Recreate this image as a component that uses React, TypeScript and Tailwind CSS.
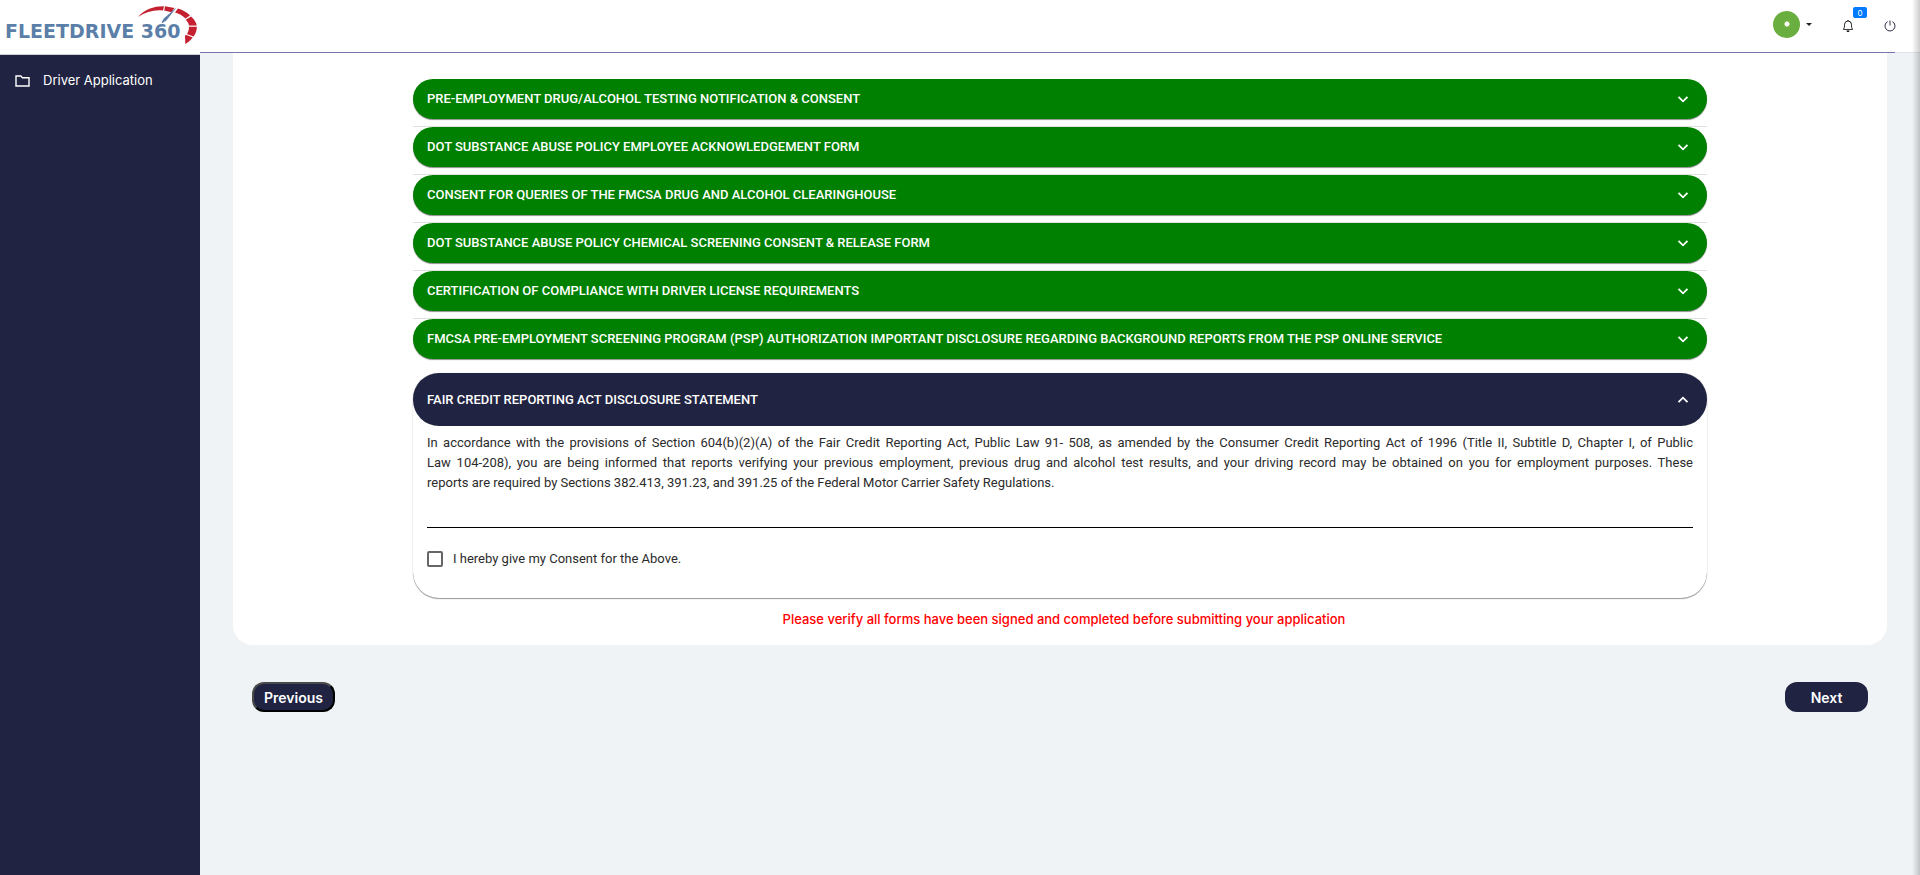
import { useState } from "react";
import { BsBell } from "react-icons/bs";

const sections: string[] = [
  "PRE-EMPLOYMENT DRUG/ALCOHOL TESTING NOTIFICATION & CONSENT",
  "DOT SUBSTANCE ABUSE POLICY EMPLOYEE ACKNOWLEDGEMENT FORM",
  "CONSENT FOR QUERIES OF THE FMCSA DRUG AND ALCOHOL CLEARINGHOUSE",
  "DOT SUBSTANCE ABUSE POLICY CHEMICAL SCREENING CONSENT & RELEASE FORM",
  "CERTIFICATION OF COMPLIANCE WITH DRIVER LICENSE REQUIREMENTS",
  "FMCSA PRE-EMPLOYMENT SCREENING PROGRAM (PSP) AUTHORIZATION IMPORTANT DISCLOSURE REGARDING BACKGROUND REPORTS FROM THE PSP ONLINE SERVICE",
];

function Chevron({ up = false }: { up?: boolean }) {
  return (
    <svg viewBox="0 0 12 8" className="h-2 w-3 shrink-0" fill="none" stroke="white" strokeWidth="1.8" aria-hidden="true">
      <path d={up ? "M1.5 6.2 6 1.7l4.5 4.5" : "M1.5 1.8 6 6.3l4.5-4.5"} />
    </svg>
  );
}

function Gauge() {
  return (
    <svg viewBox="0 0 60 40" className="absolute top-[5px] left-[137px] h-10 w-[60px]" aria-hidden="true">
      <path d="M1 12C8 4 17 1 27 1.200L26 5.400C17 4.500 9 6.500 1 12Z" fill="#c4202f" />
      <path d="M28 1.200 37.500 3 34.500 7.200 27.200 5.500Z" fill="#c4202f" />
      <path d="M41 3.500C46 5 50 7.500 53 10.500L48.500 13.500C45.500 10.500 42 8.500 38 7.500Z" fill="#c4202f" />
      <path d="M54 11.500C57.500 14.500 59.500 18 59.700 20.500L52 20.500C51.700 18.500 50.500 16.500 48.800 14.700Z" fill="#c4202f" />
      <path d="M59.800 21.800C60 25.500 58.500 29 56.500 31.500L50 29C51.400 27 52 24.500 52 21.800Z" fill="#c4202f" />
      <path d="M55.700 32.500C53.500 35.300 51 37.500 48.300 39L48 30.500 49.600 30Z" fill="#c4202f" />
      <path d="M39.800 2.300 29.500 15.200 25.500 18 24.500 17.200 27 13.200Z" fill="#5b7fa8" />
    </svg>
  );
}

export default function App() {
  const [agreed, setAgreed] = useState(false);
  return (
    <div className="relative flex min-h-screen overflow-hidden bg-[#eff3f6] font-['Inter',sans-serif] text-[#212529]">
      <aside className="flex w-[200px] shrink-0 flex-col bg-[#212342]">
        <a href="#" className="relative flex h-[55px] items-center border-b border-[#d0d0d0] bg-white pt-2 pl-[5px] font-['DejaVu_Sans',sans-serif] text-[19px] leading-5 font-bold whitespace-nowrap text-[#5b7fa8]">
          FLEETDRIVE 360
          <Gauge />
        </a>
        <nav>
          <a href="#" className="flex h-[52px] items-center gap-3 pl-[15px] text-[13px] text-white">
            <svg viewBox="0 0 16 14" className="h-3.5 w-4" fill="none" stroke="white" strokeWidth="1.4" aria-hidden="true">
              <path d="M1 2h4.800l1.600 1.700H14v8.300H1Z" />
            </svg>
            Driver Application
          </a>
        </nav>
      </aside>

      <div className="flex min-w-0 grow flex-col">
        <header className="flex h-[53px] shrink-0 bg-white">
          <div className="flex grow items-center justify-end border-b border-[#7676ab]">
            <button type="button" aria-label="Account" className="mr-[30px] flex items-center gap-1.5 pb-1">
              <span className="flex size-[27px] items-center justify-center rounded-full bg-[#69ae3e]">
                <svg viewBox="0 0 8 8" className="size-2" stroke="white" strokeWidth="0.8" aria-hidden="true">
                  <circle cx="4" cy="4" r="1.800" fill="white" />
                  <path d="M4 .8v6.400M.8 4h6.400M1.700 1.700l4.600 4.600M6.300 1.700 1.700 6.300" />
                </svg>
              </span>
              <svg viewBox="0 0 6 3" className="h-[3px] w-1.5" aria-hidden="true">
                <path d="M0 0h6L3 3Z" fill="#212529" />
              </svg>
            </button>
            <button type="button" aria-label="Notifications" className="relative mr-[41px]">
              <BsBell className="size-3 text-black" />
              <span className="absolute -top-[13px] left-[11px] flex h-[11px] w-3.5 items-center justify-center rounded-[2px] bg-[#007bff] text-[8px] leading-none text-white">0</span>
            </button>
          </div>
          <div className="flex w-[25px] items-center border-b border-[#dde5ee]">
            <button type="button" aria-label="Log out" className="-ml-[11px]">
              <svg viewBox="0 0 12 12" className="size-3" fill="none" stroke="#33304a" strokeWidth="1" aria-hidden="true">
                <path d="M6 .5v5M3.600 1.600a5 5 0 1 0 4.800 0" />
              </svg>
            </button>
          </div>
        </header>

        <main className="px-[33px]">
          <section className="rounded-b-[20px] bg-white px-[180px] pt-[26px] pb-[18px]">
            <div className="flex flex-col gap-2 font-['Roboto',sans-serif]">
              {sections.map((title) => (
                <div key={title} className="shadow-[0_-1px_0_#e0e0e0] first:shadow-none">
                  <button type="button" aria-expanded="false" className="flex h-10 w-full items-center justify-between rounded-[20px] bg-[#008000] pr-[18px] pl-3.5 text-left text-[13px] font-medium text-white shadow-[0_1px_1px_rgba(0,0,0,0.45)]">
                    {title}
                    <Chevron />
                  </button>
                </div>
              ))}
            </div>
            <article className="mt-3.5 rounded-[26px] font-['Roboto',sans-serif] shadow-[0_1px_1px_rgba(0,0,0,0.4),0_0_1px_rgba(0,0,0,0.25)]">
              <button type="button" aria-expanded="true" className="flex h-[53px] w-full items-center justify-between rounded-[26px] bg-[#212342] pr-[18px] pl-3.5 text-left text-[13px] font-medium text-white">
                FAIR CREDIT REPORTING ACT DISCLOSURE STATEMENT
                <Chevron up />
              </button>
              <div className="px-3.5 pt-[7px] pb-[29px] text-[13px] leading-5 text-[#2b2b2b]">
                <p className="text-justify">
                  <span className="block [text-align-last:justify]">
                    In accordance with the provisions of Section 604(b)(2)(A) of the Fair Credit Reporting Act, Public Law 91- 508, as amended by the Consumer Credit Reporting Act of 1996 (Title II, Subtitle D, Chapter I, of Public
                  </span>{" "}
                  <span className="block [text-align-last:justify]">
                    Law 104-208), you are being informed that reports verifying your previous employment, previous drug and alcohol test results, and your driving record may be obtained on you for employment purposes. These
                  </span>{" "}
                  reports are required by Sections 382.413, 391.23, and 391.25 of the Federal Motor Carrier Safety Regulations.
                </p>
                <hr className="mt-[34px] border-black" />
                <label className="mt-[21px] flex items-center gap-2.5">
                  <input
                    type="checkbox"
                    checked={agreed}
                    onChange={(e) => setAgreed(e.target.checked)}
                    className="size-4 appearance-none rounded-[2px] border-2 border-[#666666] bg-white checked:bg-[#212342]"
                  />
                  I hereby give my Consent for the Above.
                </label>
              </div>
            </article>
            <p className="mt-[13px] pl-2 text-center text-[13px] leading-4 font-medium text-[#ff0000]">
              Please verify all forms have been signed and completed before submitting your application
            </p>
          </section>
          <div className="flex justify-between px-[19px] pt-[37px]">
            <button type="button" className="h-[30px] w-[83px] rounded-xl border-2 border-t-[#4a4a4a] border-r-black border-b-black border-l-[#4a4a4a] bg-[#212342] text-[14px] font-semibold text-white">
              Previous
            </button>
            <button type="button" className="h-[30px] w-[83px] rounded-xl bg-[#212342] text-[14px] font-semibold text-white">
              Next
            </button>
          </div>
        </main>
      </div>
      <div className="absolute inset-y-0 right-0 w-2 bg-linear-to-l from-black/20 to-transparent" />
    </div>
  );
}
